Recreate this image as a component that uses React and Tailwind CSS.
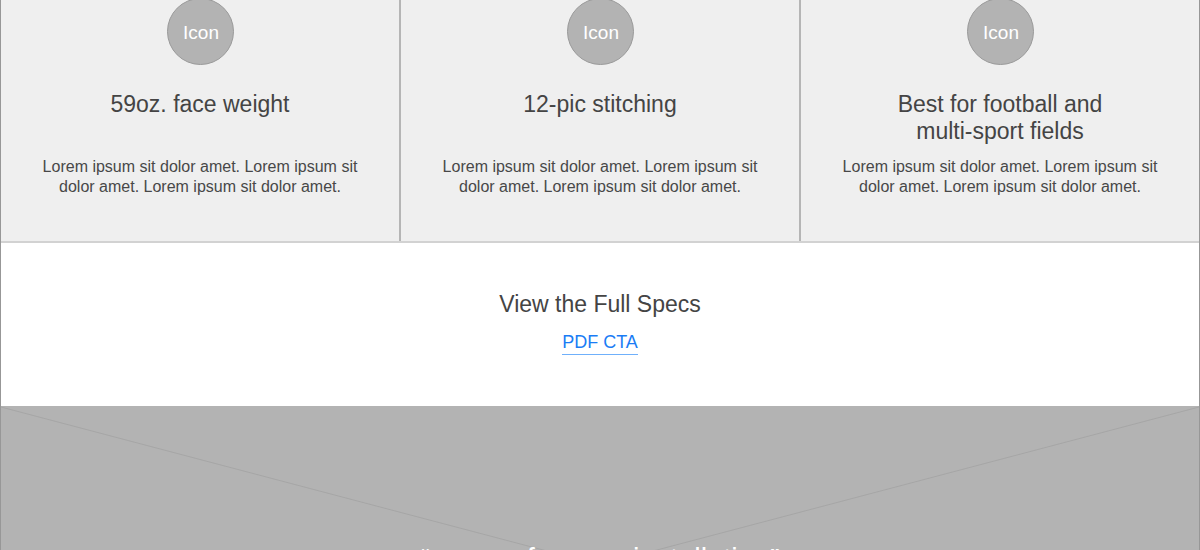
const features = [
  { title: "59oz. face weight" },
  { title: "12-pic stitching" },
  { title: "Best for football and multi-sport fields" },
];

function Feature({ title }) {
  return (
    <article className="flex flex-1 flex-col items-center px-8 pb-11 text-center">
      <div className="-mt-0.5 flex size-[67px] items-center justify-center rounded-full border border-[#9a9a9a] bg-[#b3b3b3] pt-0.5 pl-0.5 text-[19px] leading-6 text-white">
        Icon
      </div>
      <h2 className="mt-[26px] min-h-[54px] max-w-[240px] text-[23px] leading-[27px] text-[#444444]">{title}</h2>
      <p className="mt-3 max-w-[336px] text-base leading-5 text-[#484848]">
        Lorem ipsum sit dolor amet. Lorem ipsum sit dolor amet. Lorem ipsum sit dolor amet.
      </p>
    </article>
  );
}

export default function App() {
  return (
    <main className="h-screen overflow-hidden border-x border-[#979797] bg-white font-['Liberation_Sans',Arial,sans-serif]">
      <section className="flex divide-x-2 divide-[#b5b5b5] border-b-2 border-[#d2d2d2] bg-[#efefef]">
        {features.map((feature) => (
          <Feature key={feature.title} title={feature.title} />
        ))}
      </section>
      <section className="flex flex-col items-center pt-12 pb-[51px] text-center">
        <h2 className="text-[23px] leading-[27px] text-[#444444]">View the Full Specs</h2>
        <a href="#specs" className="mt-3 border-b border-[#6fb0fb] text-lg leading-6 text-[#1a7cf5]">
          PDF CTA
        </a>
      </section>
      <section className="relative bg-[#b3b3b3]">
        <svg
          className="absolute inset-0 size-full"
          viewBox="0 0 1198 320"
          preserveAspectRatio="none"
          fill="none"
          stroke="#a6a6a6"
          aria-hidden="true"
        >
          <path d="M0 1 L1198 317 M1198 1 L0 317" />
        </svg>
        <h2 className="relative pt-[137px] pb-[151px] text-center text-[29px] leading-8 text-white">
          “reason for your installation”
        </h2>
      </section>
    </main>
  );
}
